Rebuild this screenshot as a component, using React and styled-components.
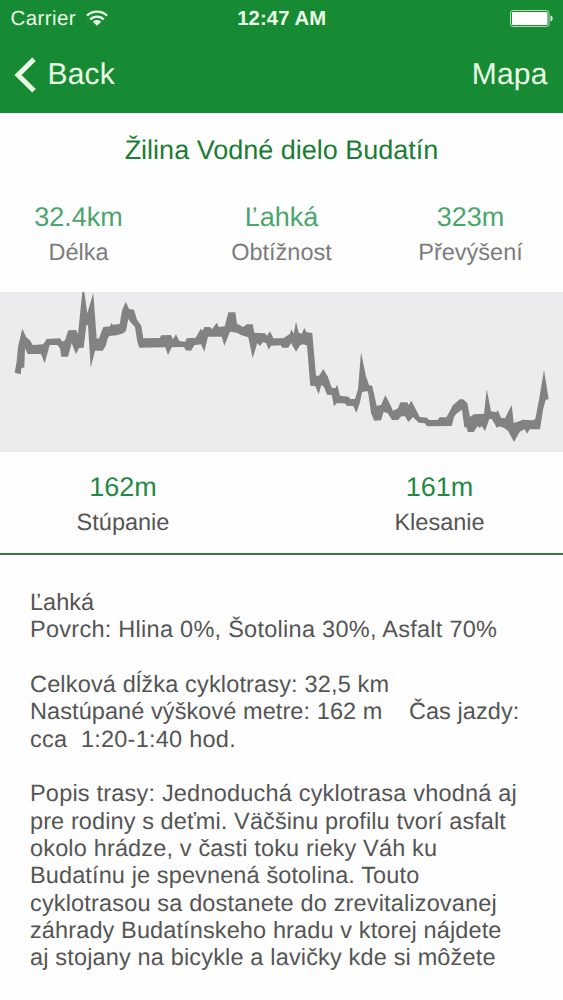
import React from "react";
import styled, { createGlobalStyle } from "styled-components";

const GlobalStyle = createGlobalStyle`
    body {
        margin: 0;
        background: #fefefe;
        font-family: "Liberation Sans", Arial, sans-serif;
        text-rendering: geometricPrecision;
    }
`;

const Screen = styled.div`
    width: 563px;
    height: 1000px;
    overflow: hidden;
    display: flex;
    flex-direction: column;
    background: #fefefe;
`;

const Header = styled.header`
    height: 113px;
    box-sizing: border-box;
    flex-shrink: 0;
    background: #178b34;
    color: #eafbe6;
`;

const StatusBar = styled.div`
    display: grid;
    grid-template-columns: 1fr auto 1fr;
    align-items: start;
    height: 37px;
    padding: 0 10px 0 10.5px;
`;

const Carrier = styled.span`
    display: flex;
    align-items: center;
    gap: 10px;
    font-size: 20.5px;
    line-height: 37px;
    letter-spacing: 0.4px;
`;

const Clock = styled.span`
    padding-top: 1px;
    font-size: 20.3px;
    font-weight: 700;
    line-height: 37px;
    letter-spacing: 0.1px;
`;

const Battery = styled.svg`
    justify-self: end;
    margin-top: 10px;
`;

const NavBar = styled.nav`
    display: flex;
    justify-content: space-between;
    align-items: center;
    height: 75px;
    padding: 0 15.5px 0 13.5px;
`;

const NavButton = styled.a`
    display: flex;
    align-items: center;
    gap: 12px;
    font-size: 30px;
    line-height: 75px;
    letter-spacing: 0.15px;
`;

const Title = styled.h1`
    margin: 0;
    padding-top: 19px;
    height: 68px;
    font-size: 27px;
    font-weight: 400;
    line-height: 36px;
    text-align: center;
    color: #1b7c33;
`;

const Stats = styled.div`
    display: grid;
    grid-template-columns: ${(props) => props.$columns};
    height: ${(props) => props.$height}px;
    flex-shrink: 0;
    text-align: center;
`;

const Stat = styled.div`
    display: flex;
    flex-direction: column;
`;

const StatValue = styled.span`
    font-size: 27px;
    line-height: 34px;
    color: ${(props) => (props.$light ? "#4ba56c" : "#1f8a45")};
`;

const StatLabel = styled.span`
    font-size: 23.5px;
    line-height: 36px;
    color: ${(props) => (props.$light ? "#7c7c7c" : "#555")};
`;

const Profile = styled.svg`
    display: block;
    flex-shrink: 0;
    margin-bottom: 18px;
    background: #ecebed;
`;

const Description = styled.div`
    border-top: 2px solid #357c43;
    padding: 34px 30px 0;
    font-size: 23.5px;
    line-height: 27.33px;
    color: #555;
`;

const Line = styled.div`
    min-height: 27.33px;
    white-space: pre;
    letter-spacing: ${(props) => props.$tracking ?? 0.16}px;
`;

const upperEdge =
    "14.7,80.7 16.7,69.3 18,54.7 22.3,36.7 26.3,45.3 30,48.3 32.7,53 43.3,52.3 46.7,47 60,46.3 62.3,49.7 65,48.3 68.3,38.3 76,38 78,42 82.3,0 84.3,0 87.3,21.3 93.3,1 96.7,46.7 99,46.3 103.3,35 110,34.3 111.3,31 112.7,32.7 119.7,32 122,18.7 125.7,9.7 129,17 134,17.7 137,27.7 141.3,33.7 143.3,46.3 159.7,46 161.3,43.3 171,43 173,47.3 176,42.3 179.3,49 185,49.7 186.7,46.3 195.7,45.7 200.7,36.7 202.7,38.7 204.3,35 210,35 212,37.3 216.7,30.7 218.7,35 224.7,34.3 228.3,20.3 235.3,20.3 237,31.7 243.3,35 246.7,32.3 252.7,32.3 254.3,40.7 265,41.3 267,43.7 270,39.3 273.3,46.3 283.3,46.3 290,41.7 291.3,37.3 293.7,41.7 296,29.7 298.7,40.7 301.7,41.7 304.3,36 306.7,40.3 312.3,41 316,83.7 319,83.7 323.3,77 328,85 331.7,95.7 335.3,96.3 337.3,92.7 340,103.7 348.3,104.7 350.7,107 355,107 358,97.3 361,60.3 366,84.3 369,93 372.3,94 376.7,113.7 381,113 385.3,103.3 390.3,112.7 393,118.7 398,116.3 400.3,110.3 407.3,110.3 408.7,113 411.3,108.7 416.3,118.3 419.7,125 427,125.7 429,128 437.7,128 439.7,125.3 446.3,125.3 449,120.7 453,113 457,109.7 459.7,107.3 463,107.3 467.3,111 470,125 473.7,122.3 484,121.7 486.7,97.3 491,119.3 496.3,120.3 497.7,118 501,125.7 505,126.3 511.7,113 513.7,131 520.7,128.7 522,127.7 533,128.3 535.3,127 539.3,106.3 544,78 548.7,107.3";

const lowerEdge =
    "545.7,107.7 543,117.7 540,137.3 529.7,137.3 527,141.7 524.7,137.3 519.7,139.7 514,150 508,138.7 503.7,135.7 499,134.3 497,136 491.7,127 489.3,127 485,139 481.7,134 479.7,136 477.7,134 473.7,140 467.7,140 466.7,135.7 464.3,135 462,117.7 456.3,121.7 454,125 451.7,134 427,134.3 424.7,131.3 418.7,130.7 413,125 408.3,130 405,124.3 401.3,124.3 398,128 392,128 387.7,121.3 383.7,119.7 381,128.3 374.3,128.7 371,121.3 368.3,101.3 367.3,99 362,100.3 360,110.3 356.3,121 353.3,114 346.7,113.7 344.7,111.3 336.7,111.3 334,114.3 331.7,103 327,102.7 324,95 321.3,93 318.7,102.3 315.3,94 310.3,93.7 307,53.7 303.7,52.3 300.3,53 296,59.7 291,51 288.3,55.7 282.3,55.7 280.7,53.3 271,53.7 268.7,57.7 266,51 262.7,50.3 260,54 257.3,51 252.7,66.3 248.3,45.3 241.7,43.3 236.7,40.7 230,39.7 224.3,53.7 221.7,44.7 208,44.7 204.3,59.7 201,52.3 194.3,53.3 191,58.7 185.7,58.3 184,55 171.7,55.3 168,63 165.3,55.3 139.3,55.7 137.3,49.7 135,35.3 130.7,30.3 128.3,27 126,38.7 123.3,41.3 116.7,43.3 111,43.7 108.3,44.7 105.7,53.7 102.7,58.7 95,58.7 90.7,75.7 88,33 86.3,33.3 83.7,55.7 79,56 76,62.3 71.7,51.3 68,64.7 61.3,64.7 60,56.3 57.3,53 49.7,53 44.7,71.3 41,62 27.7,62 25,56.3 24.3,75.3 21.3,76.3 20.7,82.3";

const description = [
    { text: "Ľahká", tracking: 0 },
    { text: "Povrch: Hlina 0%, Šotolina 30%, Asfalt 70%", tracking: 0.27 },
    { text: "" },
    { text: "Celková dĺžka cyklotrasy: 32,5 km" },
    { text: "Nastúpané výškové metre: 162 m    Čas jazdy:", tracking: 0.08 },
    { text: "cca  1:20-1:40 hod.", tracking: 0.25 },
    { text: "" },
    { text: "Popis trasy: Jednoduchá cyklotrasa vhodná aj", tracking: 0.2 },
    { text: "pre rodiny s deťmi. Väčšinu profilu tvorí asfalt", tracking: 0.1 },
    { text: "okolo hrádze, v časti toku rieky Váh ku" },
    { text: "Budatínu je spevnená šotolina. Touto", tracking: 0.12 },
    { text: "cyklotrasou sa dostanete do zrevitalizovanej" },
    { text: "záhrady Budatínskeho hradu v ktorej nájdete", tracking: 0.12 },
    { text: "aj stojany na bicykle a lavičky kde si môžete" },
];

const WifiIcon = () => (
    <svg width="22" height="17" viewBox="0 0 22 17" fill="none" stroke="#eafbe6" strokeWidth="2.4">
        <path d="M1 5.7C6.5 0.3 15.5 0.3 21 5.7" />
        <path d="M4.2 9.5C8 5.7 14 5.7 17.8 9.5" />
        <path d="M6.8 11.7C9.2 9.5 12.8 9.5 15.2 11.7L11 15.8Z" fill="#eafbe6" stroke="none" />
    </svg>
);

const BatteryIcon = () => (
    <Battery width="43" height="17" viewBox="0 0 43 17">
        <rect x="0.5" y="0.5" width="38.5" height="16" rx="2.5" fill="none" stroke="#b5dcb9" />
        <rect x="2" y="2" width="35.5" height="13" rx="1" fill="#fff" />
        <path d="M40.5 5.5C43.3 6 43.3 11 40.5 11.5Z" fill="#eafbe6" />
    </Battery>
);

const BackIcon = () => (
    <svg width="22" height="36" viewBox="0 0 22 36" fill="none" stroke="#eafbe6" strokeWidth="5">
        <path d="M20 2.2L4 18L20 33.8" />
    </svg>
);

const StatItem = (props) => {
    const { value, label, light } = props;
    return (
        <Stat>
            <StatValue $light={light}>{value}</StatValue>
            <StatLabel $light={light}>{label}</StatLabel>
        </Stat>
    );
};

const App = () => {
    return (
        <Screen>
            <GlobalStyle />
            <Header>
                <StatusBar>
                    <Carrier>Carrier <WifiIcon /></Carrier>
                    <Clock>12:47 AM</Clock>
                    <BatteryIcon />
                </StatusBar>
                <NavBar>
                    <NavButton><BackIcon />Back</NavButton>
                    <NavButton>Mapa</NavButton>
                </NavBar>
            </Header>
            <Title>Žilina Vodné dielo Budatín</Title>
            <Stats $columns="157px 249px 129px" $height={92}>
                <StatItem light value="32.4km" label="Délka" />
                <StatItem light value="Ľahká" label="Obtížnost" />
                <StatItem light value="323m" label="Převýšení" />
            </Stats>
            <Profile width="563" height="160" viewBox="0 0 563 160">
                <polygon points={`${upperEdge} ${lowerEdge}`} fill="#828183" />
            </Profile>
            <Stats $columns="246px 387px" $height={83}>
                <StatItem value="162m" label="Stúpanie" />
                <StatItem value="161m" label="Klesanie" />
            </Stats>
            <Description>
                {description.map((line, index) => (
                    <Line key={index} $tracking={line.tracking}>{line.text}</Line>
                ))}
            </Description>
        </Screen>
    );
};

export default App;
